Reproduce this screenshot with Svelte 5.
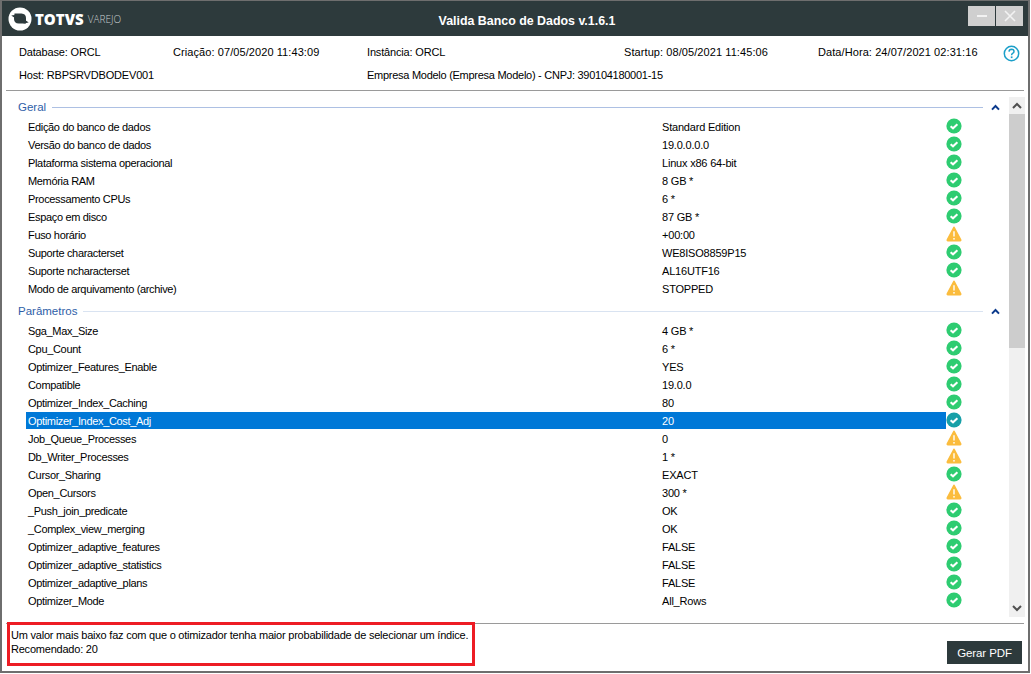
<script>
  const geral = [
    ['Edição do banco de dados','Standard Edition','ok'],
    ['Versão do banco de dados','19.0.0.0.0','ok'],
    ['Plataforma sistema operacional','Linux x86 64-bit','ok'],
    ['Memória RAM','8 GB *','ok'],
    ['Processamento CPUs','6 *','ok'],
    ['Espaço em disco','87 GB *','ok'],
    ['Fuso horário','+00:00','warn'],
    ['Suporte characterset','WE8ISO8859P15','ok'],
    ['Suporte ncharacterset','AL16UTF16','ok'],
    ['Modo de arquivamento (archive)','STOPPED','warn'],
  ];
  const params = [
    ['Sga_Max_Size','4 GB *','ok'],
    ['Cpu_Count','6 *','ok'],
    ['Optimizer_Features_Enable','YES','ok'],
    ['Compatible','19.0.0','ok'],
    ['Optimizer_Index_Caching','80','ok'],
    ['Optimizer_Index_Cost_Adj','20','sel'],
    ['Job_Queue_Processes','0','warn'],
    ['Db_Writer_Processes','1 *','warn'],
    ['Cursor_Sharing','EXACT','ok'],
    ['Open_Cursors','300 *','warn'],
    ['_Push_join_predicate','OK','ok'],
    ['_Complex_view_merging','OK','ok'],
    ['Optimizer_adaptive_features','FALSE','ok'],
    ['Optimizer_adaptive_statistics','FALSE','ok'],
    ['Optimizer_adaptive_plans','FALSE','ok'],
    ['Optimizer_Mode','All_Rows','ok'],
  ];
  const groups = [
    { title: 'Geral', rows: geral, line: 'strong' },
    { title: 'Parâmetros', rows: params, line: 'soft' },
  ];
</script>

<div class="window">
  <header class="titlebar">
    <div class="brand">
      <svg class="logo" width="24" height="24" viewBox="0 0 24 24">
        <circle cx="12" cy="12" r="11.5" fill="#fff"/>
        <path d="M6.5 6.6 L13.5 6.6 Q18 7 18 11 L18 16.6 L10.8 16.6 Q6 16.2 6 12 Z" fill="#2d3a3c"/>
        <path d="M4 8.4 L8 8 L20 15.6 L16 16.6 Z" fill="#2d3a3c"/>
        <path d="M3.2 8.6 L7 8.6 L7 11 Z M20.8 15.4 L17 15.4 L17 13 Z" fill="#2d3a3c"/>
      </svg>
      <span class="totvs">TOTVS</span>
      <span class="varejo">VAREJO</span>
    </div>
    <div class="wintitle">Valida Banco de Dados v.1.6.1</div>
    <div class="winbtns">
      <button class="winbtn" aria-label="Minimizar"><svg width="12" height="12" viewBox="0 0 12 12"><path d="M1 6h10" stroke="#f2f2f2" stroke-width="2"/></svg></button>
      <button class="winbtn" aria-label="Fechar"><svg width="12" height="12" viewBox="0 0 12 12"><path d="M1 1l10 10M11 1L1 11" stroke="#f2f2f2" stroke-width="1.6"/></svg></button>
    </div>
  </header>

  <section class="info">
    <span class="tight">Database: ORCL</span>
    <span class="wide">Criação: 07/05/2020 11:43:09</span>
    <span class="tight">Instância: ORCL</span>
    <span class="wide">Startup: 08/05/2021 11:45:06</span>
    <span class="wide">Data/Hora: 24/07/2021 02:31:16</span>
    <svg class="help" width="17" height="17" viewBox="0 0 17 17">
      <circle cx="8.5" cy="8.5" r="7.2" fill="none" stroke="#1b9fc9" stroke-width="1.5"/>
      <path d="M6 6.6 Q6.2 4.3 8.6 4.3 Q11 4.4 11 6.4 Q11 7.6 9.6 8.3 Q8.6 8.9 8.6 10.2" fill="none" stroke="#1b9fc9" stroke-width="1.5"/>
      <rect x="7.8" y="11.4" width="1.7" height="1.7" fill="#1b9fc9"/>
    </svg>
    <span class="host tight">Host: RBPSRVDBODEV001</span>
    <span class="empresa">Empresa Modelo (Empresa Modelo) - CNPJ: 390104180001-15</span>
  </section>

  <div class="content">
    <div class="list">
      {#each groups as g}
        <div class="group-head">
          <span class="group-title">{g.title}</span>
          <span class="group-line {g.line}"></span>
          <svg class="chev" width="9" height="7" viewBox="0 0 9 7"><path d="M1 5.6 L4.5 2 L8 5.6" fill="none" stroke="#0b3a8c" stroke-width="2"/></svg>
        </div>
        {#each g.rows as r}
          <div class="row">
            <div class="cells" class:selected={r[2] === 'sel'}>
              <span class="name">{r[0]}</span>
              <span class="value">{r[1]}</span>
            </div>
            <span class="status">
              {#if r[2] === 'warn'}
                <svg width="16" height="16" viewBox="0 0 16 16">
                  <path d="M8 .6 Q8.6 .6 9 1.4 L15.4 13.6 Q16 15.4 14.4 15.4 L1.6 15.4 Q0 15.4 .6 13.6 L7 1.4 Q7.4 .6 8 .6Z" fill="#fbbc3d"/>
                  <path d="M8 5.2V10.6" stroke="#fff" stroke-width="1.4"/>
                  <rect x="7.3" y="12" width="1.4" height="1.6" fill="#fff"/>
                </svg>
              {:else}
                <svg width="16" height="16" viewBox="0 0 16 16">
                  <circle cx="8" cy="8" r="7.6" fill={r[2] === 'sel' ? '#17a0a8' : '#2ecc71'}/>
                  <path d="M4.6 8.2 L7 10.3 L11.4 6.2" fill="none" stroke="#fff" stroke-width="2"/>
                </svg>
              {/if}
            </span>
          </div>
        {/each}
      {/each}
    </div>
    <div class="scrollbar">
      <span class="sb-btn"><svg width="10" height="7" viewBox="0 0 10 7"><path d="M1 6 L5 2 L9 6" fill="none" stroke="#505050" stroke-width="2"/></svg></span>
      <span class="sb-track"><span class="sb-thumb"></span></span>
      <span class="sb-btn"><svg width="10" height="7" viewBox="0 0 10 7"><path d="M1 1 L5 5 L9 1" fill="none" stroke="#505050" stroke-width="2"/></svg></span>
    </div>
  </div>

  <footer class="footer">
    <div class="hint">
      <div>Um valor mais baixo faz com que o otimizador tenha maior probabilidade de selecionar um índice.</div>
      <div>Recomendado: 20</div>
    </div>
    <button class="pdf">Gerar PDF</button>
    <span class="highlight"></span>
  </footer>
</div>

<style>
  :global(body) { margin: 0; background: #fff; }
  .window {
    position: relative;
    box-sizing: border-box;
    width: 1030px;
    height: 673px;
    border: 2px solid #6e6e6e;
    border-top-width: 1px;
    background: #fff;
    font: 11px "Liberation Sans", Arial, sans-serif;
    color: #000;
    overflow: hidden;
  }
  .titlebar {
    display: grid;
    grid-template-columns: 1fr auto 1fr;
    align-items: center;
    height: 35px;
    background: #2d3a3c;
    color: #fff;
  }
  .brand { display: flex; align-items: center; padding-left: 6px; }
  .logo { flex: none; }
  .totvs { margin-left: 3px; font: 900 15px "Open Sans", sans-serif; }
  .varejo { margin: 1px 0 0 4px; font: 300 10px "Open Sans", sans-serif; color: #c6cccc; }
  .wintitle { font: bold 12.4px "Liberation Sans", sans-serif; padding: 4px 0 0 24px; }
  .winbtns { justify-self: end; align-self: start; display: flex; gap: 1px; padding: 5px 5px 0 0; }
  .winbtn {
    display: flex; align-items: center; justify-content: center;
    width: 27px; height: 20px; border: 0; padding: 0; background: #cfcfcf;
  }
  .info {
    display: grid;
    grid-template-columns: 154px 194px 257px 194px 180px 30px;
    grid-template-rows: 23px 23px;
    align-items: center;
    padding: 4px 0 5px 17px;
    height: 54px;
    box-sizing: border-box;
  }
  .info > span { white-space: nowrap; }
  .tight { letter-spacing: -.17px; }
  .wide { letter-spacing: .08px; }
  .help { grid-row: 1; grid-column: 6; justify-self: start; margin: 4px 0 0 5px; }
  .host { grid-row: 2; grid-column: 1 / 3; }
  .empresa { grid-row: 2; grid-column: 3 / 5; letter-spacing: -.27px; }
  .content {
    display: flex;
    margin: 0 4px;
    border-top: 1px solid #9a9a9a;
    border-bottom: 1px solid #9a9a9a;
    height: 534px;
    padding-top: 3px;
    box-sizing: border-box;
  }
  .list { flex: 1; min-width: 0; padding-right: 4px; }
  .group-head {
    display: flex; align-items: center;
    height: 24px;
    padding: 2px 0 0 12px;
    box-sizing: border-box;
  }
  .group-title { color: #2e5ea8; font-size: 11.5px; }
  .group-line { flex: 1; height: 1px; margin: 0 8px 0 6px; }
  .group-line.strong { background: #adc0e3; }
  .group-line.soft { background: #d9e3f1; }
  .chev { flex: none; margin-right: 5px; }
  .row { display: flex; height: 18px; align-items: flex-start; padding-left: 20px; }
  .cells {
    flex: 1;
    display: flex;
    height: 17px;
    align-items: center;
    padding-left: 2px;
    min-width: 0;
  }
  .cells.selected { background: #0078d7; color: #fff; }
  .name { width: 634px; white-space: nowrap; letter-spacing: -.33px; }
  .value { white-space: nowrap; letter-spacing: -.2px; }
  .status { flex: none; width: 16px; height: 16px; margin-right: 43px; }
  .status svg { display: block; }
  .scrollbar {
    flex: none; width: 16px; margin: 3px -1px 0 0;
    display: flex; flex-direction: column;
    background: #f0f0f0; height: 520px;
  }
  .sb-btn { height: 17px; display: flex; align-items: center; justify-content: center; flex: none; }
  .sb-track { flex: 1; display: block; }
  .sb-thumb { display: block; height: 234px; background: #cdcdcd; }
  .footer {
    position: relative;
    display: flex;
    justify-content: space-between;
    height: 47px;
  }
  .hint { padding: 4px 0 0 9px; line-height: 14px; letter-spacing: -.22px; }
  .pdf {
    align-self: flex-start;
    margin: 17px 6px 0 0;
    width: 75px; height: 23px;
    border: 0;
    background: #2d3a3c;
    color: #fff;
    font: 11.5px "Liberation Sans", sans-serif;
    letter-spacing: -.1px;
  }
  .highlight {
    position: absolute;
    left: 5px; top: -2px;
    width: 468px; height: 44px;
    border: 3px solid #ed1c24;
    box-sizing: border-box;
  }
</style>
